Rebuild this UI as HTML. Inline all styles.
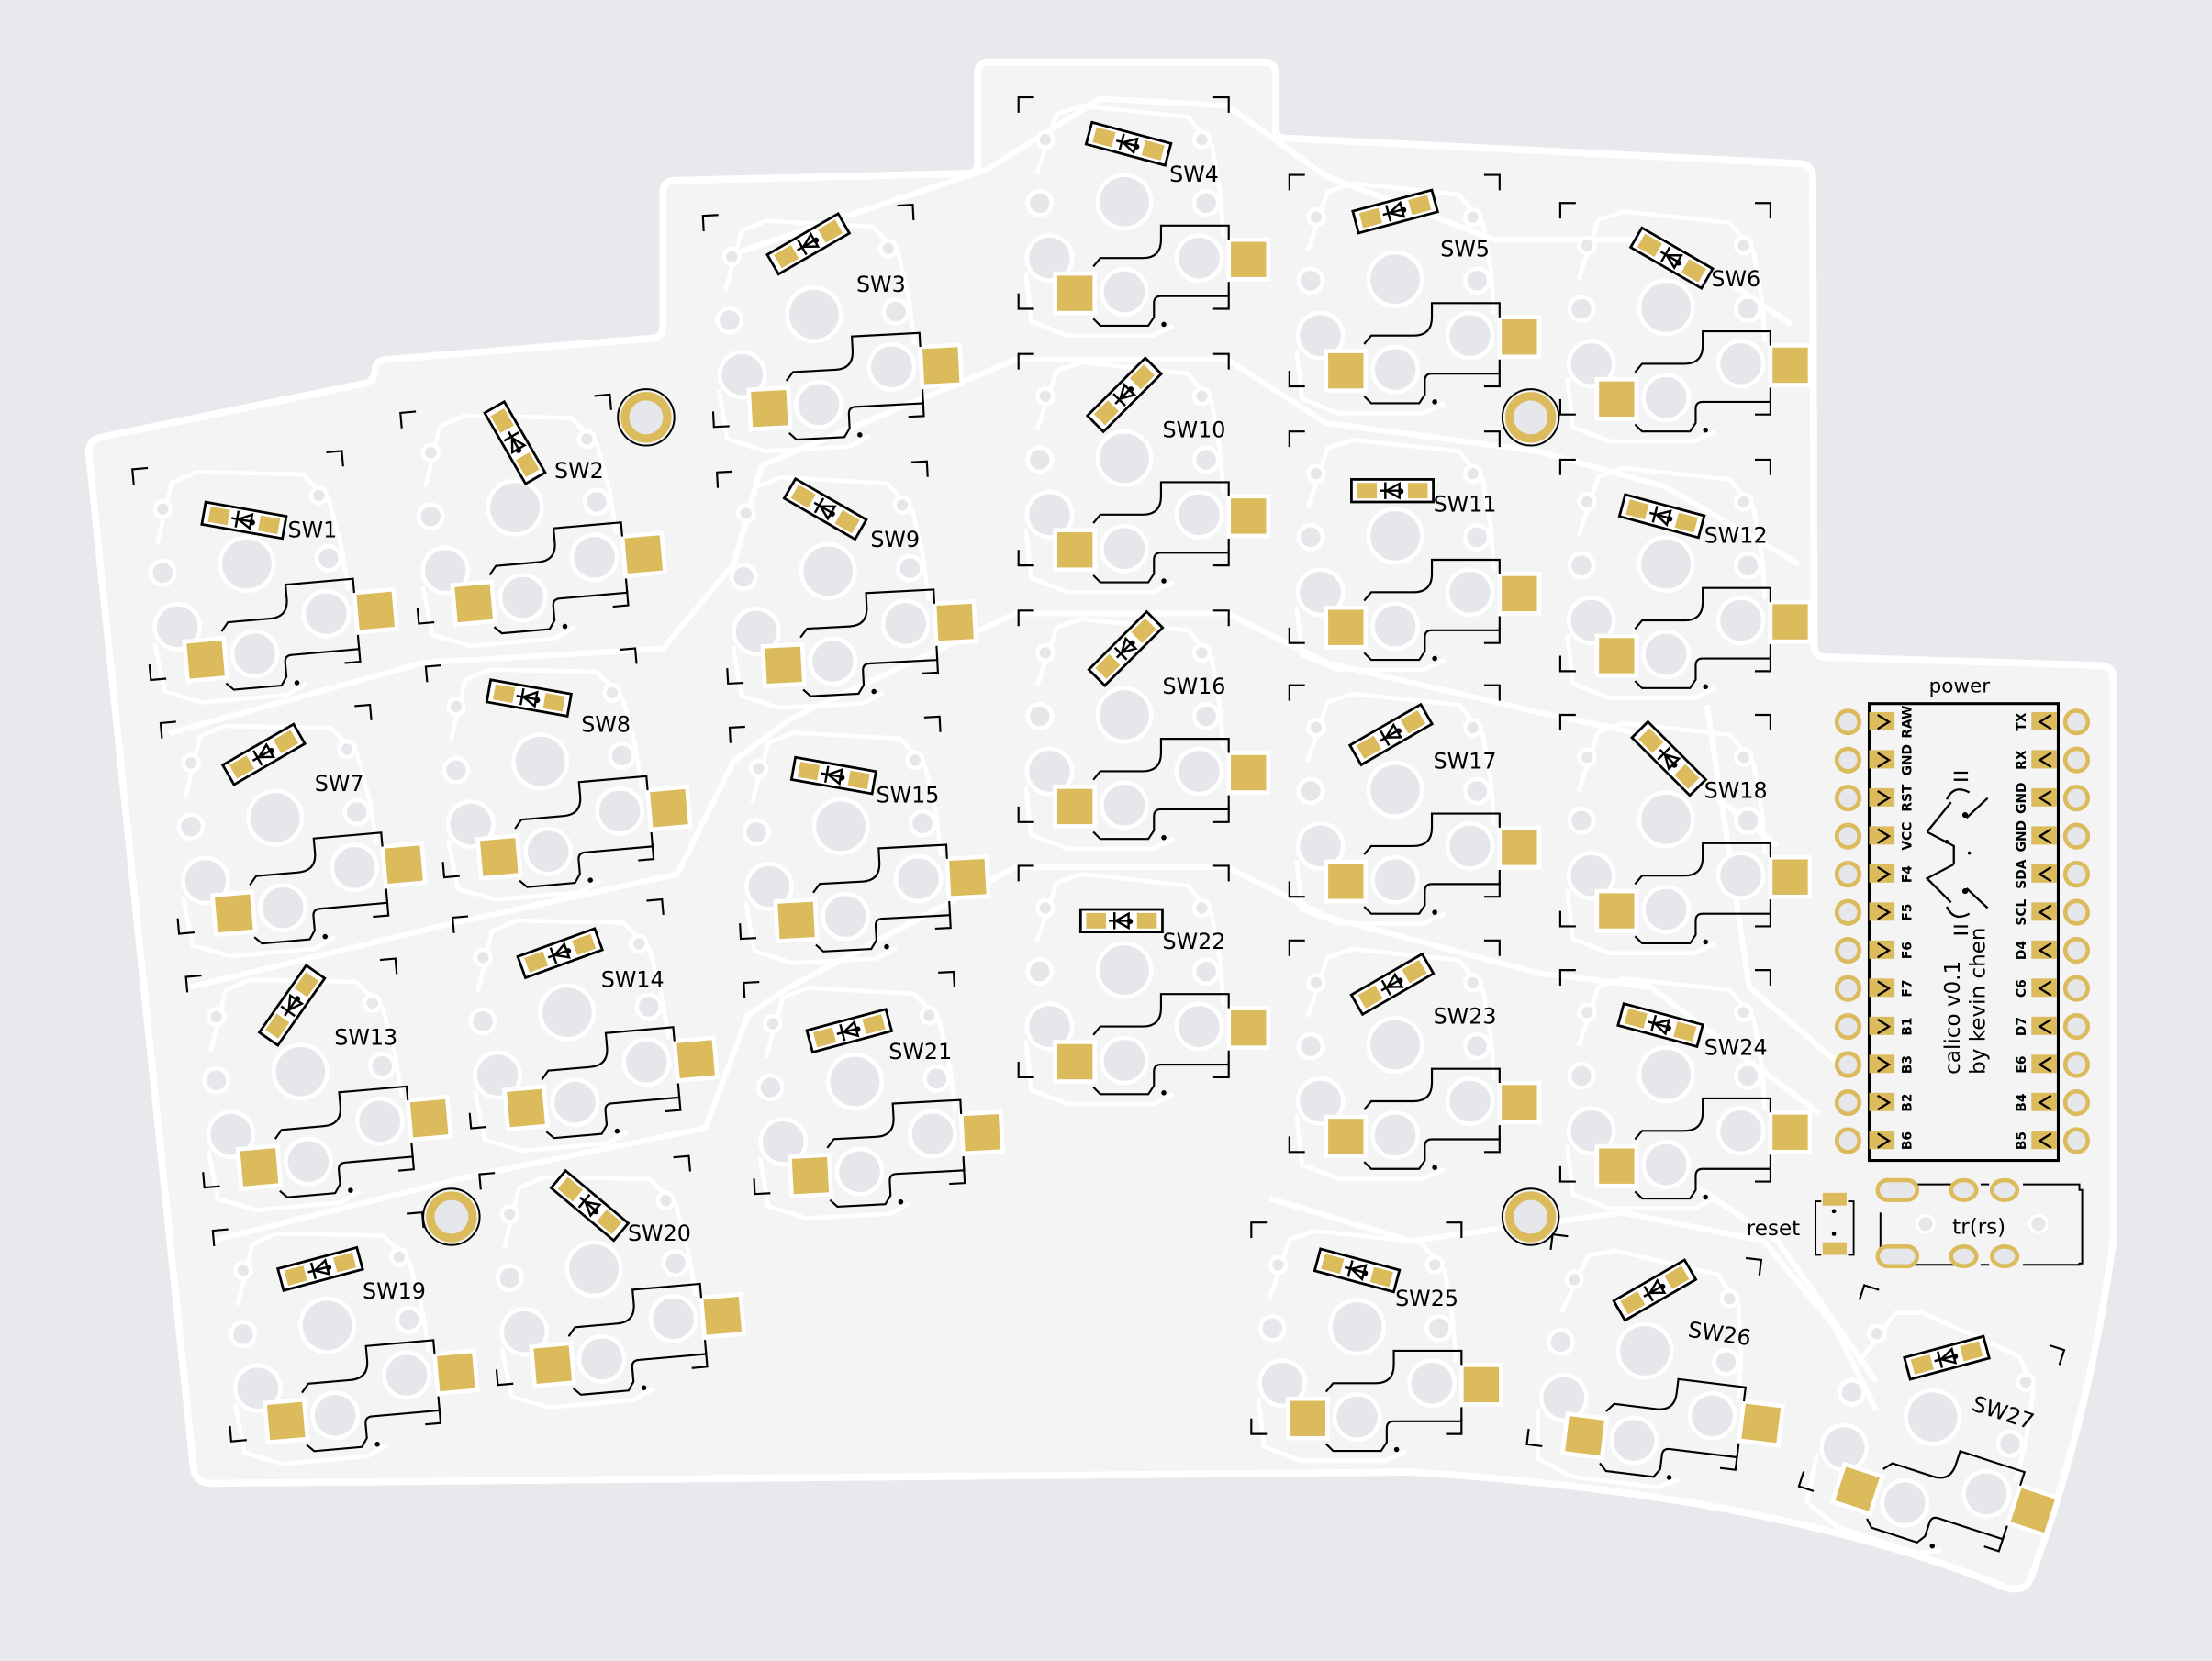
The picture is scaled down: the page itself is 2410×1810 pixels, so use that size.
<!DOCTYPE html>
<html><head><meta charset="utf-8"><style>
html,body{margin:0;padding:0;background:#e8e9ec;}
svg{display:block}
text{font-family:"DejaVu Sans","Liberation Sans",sans-serif;fill:#000}
</style></head><body>
<svg width="2410" height="1810" viewBox="0 0 1568 1178" preserveAspectRatio="none" xmlns="http://www.w3.org/2000/svg">
<defs>
<g id="fp">
  <path d="M-62,-20 L-48,-62 L-30,-68 L45,-60 L62,-40 L68,-5 L70,25 M-70,50 L-66,85 L-40,95 L20,95 L35,88" fill="none" stroke="#fff" stroke-width="3"/>
  <g fill="#e6e7ea" stroke="#fff" stroke-width="3">
    <circle cx="0" cy="0" r="19"/>
    <circle cx="-60" cy="1" r="8.5"/>
    <circle cx="58" cy="1" r="8.5"/>
    <circle cx="-56" cy="-44" r="5.5"/>
    <circle cx="55" cy="-44" r="5.5"/>
    <circle cx="-53" cy="40" r="16"/>
    <circle cx="0" cy="64" r="16"/>
    <circle cx="53" cy="40" r="16"/>
  </g>
  <g fill="#dcbb5c" stroke="#fff" stroke-width="3">
    <rect x="-49" y="51" width="28" height="28"/>
    <rect x="74" y="27" width="28" height="28"/>
  </g>
  <g fill="none" stroke="#000" stroke-width="1.4">
    <path d="M-22,46 L-17,40 L13,40 Q26,40 26,27 L26,17 L74,17 L74,27"/>
    <path d="M74,57 L74,67 L26,67 Q21,67 21,72 L21,82 L17,88 L-17,88 L-22,83"/>
    <path d="M-75,-63 L-75,-74 L-64,-74 M63,-74 L74,-74 L74,-63 M-75,65 L-75,76 L-64,76 M63,76 L74,76 L74,65"/>
  </g>
  <circle cx="28" cy="87" r="1.8" fill="#000"/>
</g>
<g id="dd">
  <rect x="-29" y="-8" width="58" height="16" fill="#fff" stroke="#000" stroke-width="1.8"/>
  <rect x="-25" y="-5.5" width="14" height="11" fill="#dcbb5c"/>
  <rect x="11" y="-5.5" width="14" height="11" fill="#dcbb5c"/>
  <path d="M-5,-6 L-5,6 M-9,0 L7,0 M5,-5 L-4,0 L5,5 Z" fill="none" stroke="#000" stroke-width="1.6"/>
  <circle cx="6" cy="0.5" r="2" fill="#000"/>
</g>
<g id="mh">
  <circle r="20" fill="#f4f4f4" stroke="#000" stroke-width="1.3"/>
  <circle r="15" fill="#e6e7ea" stroke="#dcbb5c" stroke-width="6"/>
</g>
<g id="pin"><circle r="8" fill="#e6e7ea" stroke="#dcbb5c" stroke-width="3"/></g>
</defs>

<path d="M72,310 L258,272 Q266,270 266,262 Q266,256 274,255 L462,240 Q470,239 470,231 L470,136 Q470,128 478,128 L685,123 Q693,123 693,115 L693,52 Q693,44 701,44 L896,44 Q904,44 904,52 L904,90 Q904,98 912,98 L1276,116 Q1285,117 1285,126 L1286,458 Q1286,466 1294,466 L1490,472 Q1498,473 1498,481 L1498,880 Q1480,1010 1440,1118 Q1436,1130 1422,1126 Q1260,1060 1000,1044 L150,1052 Q138,1052 137,1040 L63,322 Q62,312 72,310 Z" fill="#f4f4f4" stroke="#fff" stroke-width="5"/>

<g fill="none" stroke="#fff" stroke-width="4" stroke-linejoin="round">
  <path d="M120,520 L300,470 L470,460 L520,400 L540,330 L720,255 L870,255 L940,300 L1090,320 L1180,345 L1275,400"/>
  <path d="M135,700 L320,655 L480,620 L520,540 L560,510 L720,435 L870,435 L940,470 L1090,505 L1160,520 L1260,600"/>
  <path d="M150,880 L330,835 L500,800 L530,720 L560,700 L720,615 L870,615 L940,650 L1090,690 L1170,700 L1290,790"/>
  <path d="M520,180 L700,120 L780,70 L870,75 L940,125 L1060,170 L1180,170 L1270,230"/>
  <path d="M900,850 L1000,880 L1150,860 L1250,880 L1300,940 L1330,1000"/>
  <path d="M1210,500 L1240,700 L1310,760"/>
  <path d="M1200,840 L1260,880 L1330,980"/>
</g>

<use href="#fp" transform="translate(175,400) rotate(-5)"/>
<use href="#fp" transform="translate(365,360) rotate(-5)"/>
<use href="#fp" transform="translate(577,223) rotate(-3)"/>
<use href="#fp" transform="translate(797,143)"/>
<use href="#fp" transform="translate(989,198)"/>
<use href="#fp" transform="translate(1181,218)"/>
<use href="#fp" transform="translate(195,580) rotate(-5)"/>
<use href="#fp" transform="translate(383,540) rotate(-5)"/>
<use href="#fp" transform="translate(587,405) rotate(-3)"/>
<use href="#fp" transform="translate(797,325)"/>
<use href="#fp" transform="translate(989,380)"/>
<use href="#fp" transform="translate(1181,400)"/>
<use href="#fp" transform="translate(213,760) rotate(-5)"/>
<use href="#fp" transform="translate(402,718) rotate(-5)"/>
<use href="#fp" transform="translate(596,586) rotate(-3)"/>
<use href="#fp" transform="translate(797,507)"/>
<use href="#fp" transform="translate(989,560)"/>
<use href="#fp" transform="translate(1181,581)"/>
<use href="#fp" transform="translate(232,940) rotate(-5)"/>
<use href="#fp" transform="translate(421,900) rotate(-5)"/>
<use href="#fp" transform="translate(606,767) rotate(-3)"/>
<use href="#fp" transform="translate(797,688)"/>
<use href="#fp" transform="translate(989,741)"/>
<use href="#fp" transform="translate(1181,762)"/>
<use href="#fp" transform="translate(962,941)"/>
<use href="#fp" transform="translate(1166,958) rotate(7)"/>
<use href="#fp" transform="translate(1370,1005) rotate(18)"/>

<use href="#dd" transform="translate(173,369) rotate(10)"/>
<use href="#dd" transform="translate(365,314) rotate(60)"/>
<use href="#dd" transform="translate(573,173) rotate(-30)"/>
<use href="#dd" transform="translate(800,102) rotate(15)"/>
<use href="#dd" transform="translate(989,150) rotate(-15)"/>
<use href="#dd" transform="translate(1185,183) rotate(30)"/>
<use href="#dd" transform="translate(187,535) rotate(-30)"/>
<use href="#dd" transform="translate(375,495) rotate(10)"/>
<use href="#dd" transform="translate(585,361) rotate(30)"/>
<use href="#dd" transform="translate(797,280) rotate(-45)"/>
<use href="#dd" transform="translate(987,348)"/>
<use href="#dd" transform="translate(1178,366) rotate(15)"/>
<use href="#dd" transform="translate(207,713) rotate(-55)"/>
<use href="#dd" transform="translate(397,676) rotate(-20)"/>
<use href="#dd" transform="translate(591,550) rotate(10)"/>
<use href="#dd" transform="translate(798,460) rotate(-45)"/>
<use href="#dd" transform="translate(986,521) rotate(-30)"/>
<use href="#dd" transform="translate(1183,538) rotate(45)"/>
<use href="#dd" transform="translate(227,900) rotate(-15)"/>
<use href="#dd" transform="translate(418,855) rotate(40)"/>
<use href="#dd" transform="translate(602,731) rotate(-15)"/>
<use href="#dd" transform="translate(795,653)"/>
<use href="#dd" transform="translate(987,698) rotate(-30)"/>
<use href="#dd" transform="translate(1177,727) rotate(15)"/>
<use href="#dd" transform="translate(962,901) rotate(15)"/>
<use href="#dd" transform="translate(1173,915) rotate(-30)"/>
<use href="#dd" transform="translate(1380,963) rotate(-15)"/>

<g font-size="15.5">
<text x="204" y="381">SW1</text><text x="393" y="339">SW2</text><text x="607" y="207">SW3</text>
<text x="829" y="129">SW4</text><text x="1021" y="182">SW5</text><text x="1213" y="203">SW6</text>
<text x="223" y="561">SW7</text><text x="412" y="519">SW8</text><text x="617" y="388">SW9</text>
<text x="824" y="310">SW10</text><text x="1016" y="363">SW11</text><text x="1208" y="385">SW12</text>
<text x="237" y="741">SW13</text><text x="426" y="700">SW14</text><text x="621" y="569">SW15</text>
<text x="824" y="492">SW16</text><text x="1016" y="545">SW17</text><text x="1208" y="566">SW18</text>
<text x="257" y="921">SW19</text><text x="445" y="880">SW20</text><text x="630" y="751">SW21</text>
<text x="824" y="673">SW22</text><text x="1016" y="726">SW23</text><text x="1208" y="748">SW24</text>
<text x="989" y="926">SW25</text>
<text x="1196" y="948" transform="rotate(8 1196 948)">SW26</text>
<text x="1397" y="1000" transform="rotate(18 1397 1000)">SW27</text>
</g>

<use href="#mh" transform="translate(458,296)"/>
<use href="#mh" transform="translate(1085,296)"/>
<use href="#mh" transform="translate(320,863)"/>
<use href="#mh" transform="translate(1085,863)"/>

<text x="1389" y="491" font-size="14" text-anchor="middle">power</text>
<rect x="1325" y="499" width="134" height="324" fill="none" stroke="#000" stroke-width="2"/>
<g>
<g transform="translate(0,512)"><use href="#pin" x="1310"/><use href="#pin" x="1472"/></g>
<g transform="translate(0,539)"><use href="#pin" x="1310"/><use href="#pin" x="1472"/></g>
<g transform="translate(0,566)"><use href="#pin" x="1310"/><use href="#pin" x="1472"/></g>
<g transform="translate(0,593)"><use href="#pin" x="1310"/><use href="#pin" x="1472"/></g>
<g transform="translate(0,620)"><use href="#pin" x="1310"/><use href="#pin" x="1472"/></g>
<g transform="translate(0,647)"><use href="#pin" x="1310"/><use href="#pin" x="1472"/></g>
<g transform="translate(0,674)"><use href="#pin" x="1310"/><use href="#pin" x="1472"/></g>
<g transform="translate(0,701)"><use href="#pin" x="1310"/><use href="#pin" x="1472"/></g>
<g transform="translate(0,728)"><use href="#pin" x="1310"/><use href="#pin" x="1472"/></g>
<g transform="translate(0,755)"><use href="#pin" x="1310"/><use href="#pin" x="1472"/></g>
<g transform="translate(0,782)"><use href="#pin" x="1310"/><use href="#pin" x="1472"/></g>
<g transform="translate(0,809)"><use href="#pin" x="1310"/><use href="#pin" x="1472"/></g>
</g>
<g fill="#dcbb5c">
<rect x="1325" y="505" width="18" height="13"/><rect x="1440" y="505" width="18" height="13"/>
<rect x="1325" y="532" width="18" height="13"/><rect x="1440" y="532" width="18" height="13"/>
<rect x="1325" y="559" width="18" height="13"/><rect x="1440" y="559" width="18" height="13"/>
<rect x="1325" y="586" width="18" height="13"/><rect x="1440" y="586" width="18" height="13"/>
<rect x="1325" y="613" width="18" height="13"/><rect x="1440" y="613" width="18" height="13"/>
<rect x="1325" y="640" width="18" height="13"/><rect x="1440" y="640" width="18" height="13"/>
<rect x="1325" y="667" width="18" height="13"/><rect x="1440" y="667" width="18" height="13"/>
<rect x="1325" y="694" width="18" height="13"/><rect x="1440" y="694" width="18" height="13"/>
<rect x="1325" y="721" width="18" height="13"/><rect x="1440" y="721" width="18" height="13"/>
<rect x="1325" y="748" width="18" height="13"/><rect x="1440" y="748" width="18" height="13"/>
<rect x="1325" y="775" width="18" height="13"/><rect x="1440" y="775" width="18" height="13"/>
<rect x="1325" y="802" width="18" height="13"/><rect x="1440" y="802" width="18" height="13"/>
</g>
<path d="M1331,507 l8,5 l-8,5 M1331,534 l8,5 l-8,5 M1331,561 l8,5 l-8,5 M1331,588 l8,5 l-8,5 M1331,615 l8,5 l-8,5 M1331,642 l8,5 l-8,5 M1331,669 l8,5 l-8,5 M1331,696 l8,5 l-8,5 M1331,723 l8,5 l-8,5 M1331,750 l8,5 l-8,5 M1331,777 l8,5 l-8,5 M1331,804 l8,5 l-8,5
M1454,507 l-8,5 l8,5 M1454,534 l-8,5 l8,5 M1454,561 l-8,5 l8,5 M1454,588 l-8,5 l8,5 M1454,615 l-8,5 l8,5 M1454,642 l-8,5 l8,5 M1454,669 l-8,5 l8,5 M1454,696 l-8,5 l8,5 M1454,723 l-8,5 l8,5 M1454,750 l-8,5 l8,5 M1454,777 l-8,5 l8,5 M1454,804 l-8,5 l8,5" fill="none" stroke="#000" stroke-width="1.5"/>
<g font-size="9" font-weight="bold" text-anchor="middle">
<text transform="translate(1355,512) rotate(-90)">RAW</text>
<text transform="translate(1355,539) rotate(-90)">GND</text>
<text transform="translate(1355,566) rotate(-90)">RST</text>
<text transform="translate(1355,593) rotate(-90)">VCC</text>
<text transform="translate(1355,620) rotate(-90)">F4</text>
<text transform="translate(1355,647) rotate(-90)">F5</text>
<text transform="translate(1355,674) rotate(-90)">F6</text>
<text transform="translate(1355,701) rotate(-90)">F7</text>
<text transform="translate(1355,728) rotate(-90)">B1</text>
<text transform="translate(1355,755) rotate(-90)">B3</text>
<text transform="translate(1355,782) rotate(-90)">B2</text>
<text transform="translate(1355,809) rotate(-90)">B6</text>
<text transform="translate(1436,512) rotate(-90)">TX</text>
<text transform="translate(1436,539) rotate(-90)">RX</text>
<text transform="translate(1436,566) rotate(-90)">GND</text>
<text transform="translate(1436,593) rotate(-90)">GND</text>
<text transform="translate(1436,620) rotate(-90)">SDA</text>
<text transform="translate(1436,647) rotate(-90)">SCL</text>
<text transform="translate(1436,674) rotate(-90)">D4</text>
<text transform="translate(1436,701) rotate(-90)">C6</text>
<text transform="translate(1436,728) rotate(-90)">D7</text>
<text transform="translate(1436,755) rotate(-90)">E6</text>
<text transform="translate(1436,782) rotate(-90)">B4</text>
<text transform="translate(1436,809) rotate(-90)">B5</text>
</g>
<text transform="translate(1389,762) rotate(-90)" font-size="15">calico v0.1</text>
<text transform="translate(1407,762) rotate(-90)" font-size="15">by kevin chen</text>
<g fill="none" stroke="#000" stroke-width="1.5">
<path d="M1366,590 L1383,569 M1366,590 L1385,600 L1385,613 M1385,613 L1366,623 L1383,640"/>
<path d="M1380,567 Q1385,556 1396,562 M1380,643 Q1385,654 1396,648"/>
<path d="M1394,580 L1409,566 M1394,630 L1409,644"/>
<path d="M1385,548 L1395,548 M1385,553 L1395,553 M1385,657 L1395,657 M1385,662 L1395,662"/>
</g>
<g fill="#000"><circle cx="1393" cy="578" r="2"/><circle cx="1393" cy="632" r="2"/><circle cx="1380" cy="597" r="1.5"/><circle cx="1396" cy="605" r="1.2"/></g>

<rect x="1292" y="846" width="17" height="9" fill="#dcbb5c"/>
<rect x="1292" y="881" width="17" height="9" fill="#dcbb5c"/>
<path d="M1291,852 l-4,0 l0,38 l4,0 M1310,852 l4,0 l0,38 l-4,0" fill="none" stroke="#000" stroke-width="1.2"/>
<circle cx="1300" cy="859" r="1.5"/><circle cx="1300" cy="875" r="1.5"/>
<text x="1238" y="876" font-size="15">reset</text>
<path d="M1333,860 L1333,885 M1356,840 L1390,840 M1404,840 L1410,840 M1434,840 L1474,840 L1474,844 L1476,844 L1476,896 L1474,896 L1474,897 L1434,897 M1404,897 L1410,897 M1356,897 L1390,897" fill="none" stroke="#000" stroke-width="1.3"/>
<g fill="#e6e7ea" stroke="#dcbb5c" stroke-width="3">
<rect x="1331" y="837" width="28" height="14" rx="7"/>
<rect x="1331" y="884" width="28" height="14" rx="7"/>
<ellipse cx="1392" cy="844" rx="9" ry="7"/><ellipse cx="1421" cy="844" rx="9" ry="7"/>
<ellipse cx="1392" cy="891" rx="9" ry="7"/><ellipse cx="1421" cy="891" rx="9" ry="7"/>
</g>
<circle cx="1365" cy="868" r="6" fill="#e6e7ea" stroke="#fff" stroke-width="2"/>
<circle cx="1445" cy="868" r="6" fill="#e6e7ea" stroke="#fff" stroke-width="2"/>
<text x="1384" y="875" font-size="15">tr(rs)</text>
</svg>
</body></html>
